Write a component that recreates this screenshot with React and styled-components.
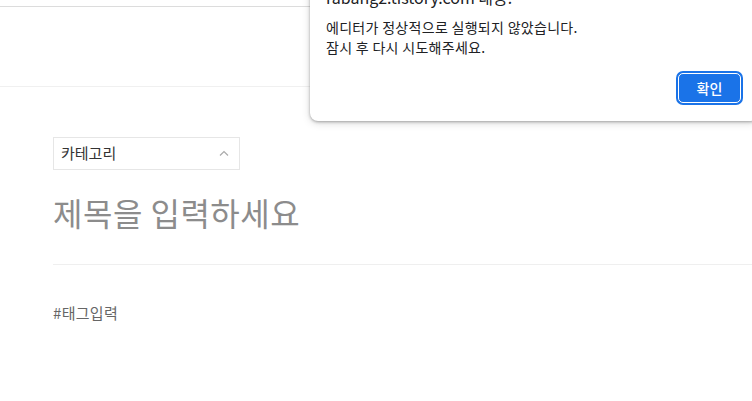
import React from 'react';
import styled, { createGlobalStyle } from 'styled-components';

const GlobalStyle = createGlobalStyle`
  html, body {
    margin: 0;
    padding: 0;
    background: #fff;
  }
  body {
    font-family: "Noto Sans CJK KR", "Noto Sans", sans-serif;
    overflow: hidden;
  }
`;

const Page = styled.div`
  width: 752px;
  height: 401px;
  position: relative;
  overflow: hidden;
`;

const TopStrip = styled.div`
  height: 6px;
  border-bottom: 1px solid #dcdcdc;
`;

const Toolbar = styled.div`
  height: 79px;
  border-bottom: 1px solid #f0f0f0;
`;

const Editor = styled.div`
  padding: 50px 0 0 53px;
`;

const CategorySelect = styled.div`
  box-sizing: border-box;
  width: 187px;
  height: 33px;
  border: 1px solid #e6e6e6;
  display: flex;
  align-items: center;
  justify-content: space-between;
  padding: 0 10px 2px 7px;
  font-size: 15px;
  color: #333;
`;

const Title = styled.div`
  margin-top: 20px;
  height: 45px;
  line-height: 45px;
  font-size: 32px;
  letter-spacing: 0.5px;
  color: #8c8c8c;
`;

const Divider = styled.hr`
  margin: 29px 0 0;
  border: 0;
  border-top: 1px solid #efefef;
`;

const Tag = styled.div`
  margin-top: 38px;
  font-size: 15px;
  letter-spacing: 0.3px;
  line-height: 20px;
  color: #666;
`;

const Dialog = styled.div`
  position: absolute;
  left: 310px;
  top: -33px;
  width: 448px;
  box-sizing: border-box;
  padding: 20px 17px 18px 16px;
  background: #fff;
  border-radius: 8px;
  box-shadow: 0 1px 3px rgba(0, 0, 0, 0.3), 0 2px 8px rgba(0, 0, 0, 0.15);
  color: #202124;
`;

const DialogTitle = styled.div`
  font-size: 16px;
  line-height: 20px;
`;

const Message = styled.div`
  margin-top: 10px;
  font-size: 14px;
  letter-spacing: 0.3px;
  line-height: 20px;
`;

const Actions = styled.div`
  display: flex;
  justify-content: flex-end;
  margin-top: 16px;
`;

const OkButton = styled.button`
  width: 63px;
  height: 30px;
  border-radius: 5px;
  background: #1a73e8;
  color: #fff;
  font-family: inherit;
  font-size: 14px;
  font-weight: 500;
  border: 1px solid #fff;
  box-shadow: 0 0 0 2px #1a73e8;
  padding: 0;
`;

const Chevron = () => (
  <svg width="10" height="6" viewBox="0 0 10 6">
    <polyline points="1,5.5 5,1.5 9,5.5" fill="none" stroke="#aaa" strokeWidth="1.2" />
  </svg>
);

export default function App() {
  return (
    <Page>
      <GlobalStyle />
      <TopStrip />
      <Toolbar />
      <Editor>
        <CategorySelect>
          <span>카테고리</span>
          <Chevron />
        </CategorySelect>
        <Title>제목을 입력하세요</Title>
        <Divider />
        <Tag>#태그입력</Tag>
      </Editor>
      <Dialog>
        <DialogTitle>rabang2.tistory.com 내용:</DialogTitle>
        <Message>
          에디터가 정상적으로 실행되지 않았습니다.
          <br />
          잠시 후 다시 시도해주세요.
        </Message>
        <Actions>
          <OkButton>확인</OkButton>
        </Actions>
      </Dialog>
    </Page>
  );
}
